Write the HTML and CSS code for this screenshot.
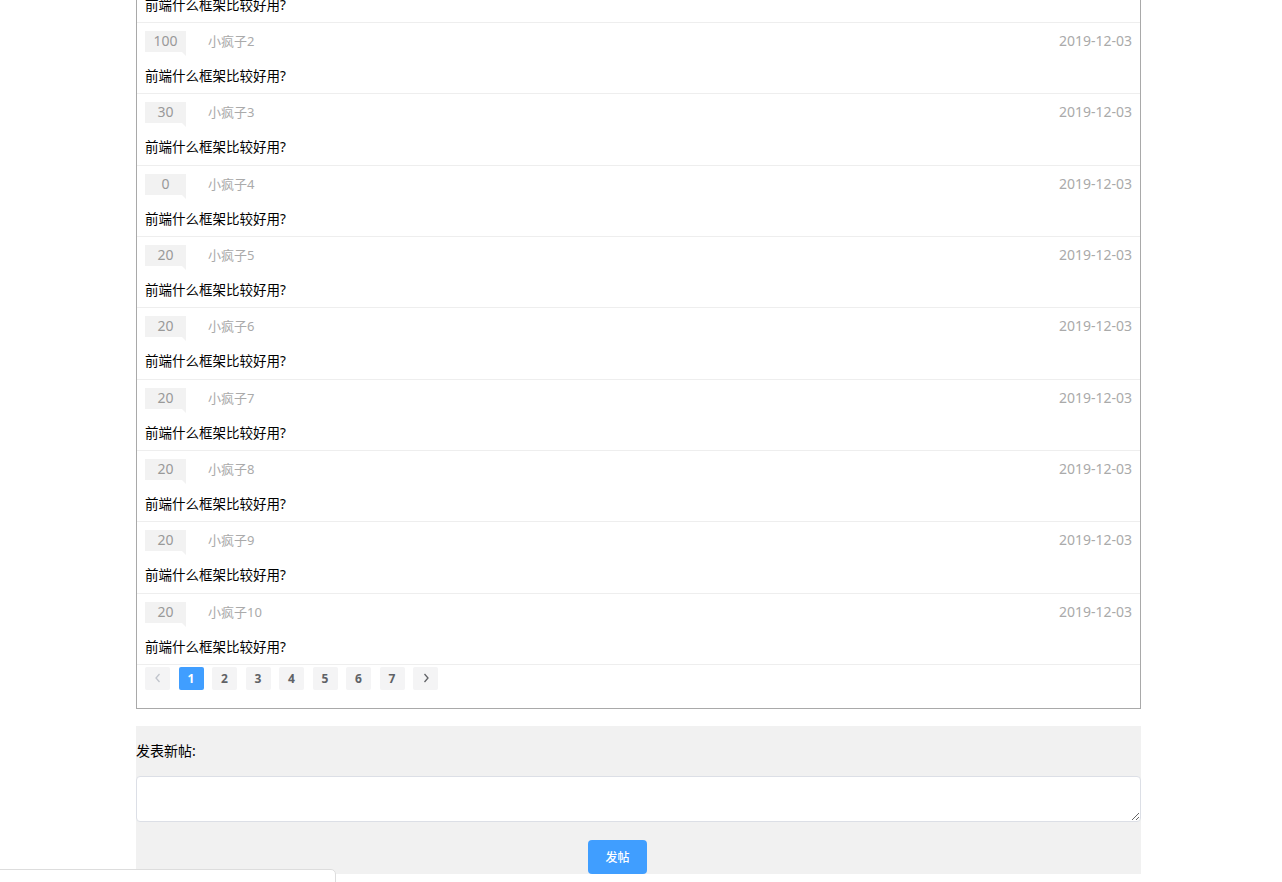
FILE: index.html
```html
<!DOCTYPE html>
<html lang="zh">
<head>
<meta charset="utf-8">
<title>帖子列表</title>
<link rel="stylesheet" href="styles.css">
</head>
<body>
<div class="page">
  <div class="list-box">
    <ul class="post-list">
      <li class="post"><div class="post-head"><span class="badge">20</span><span class="author">小疯子1</span><span class="date">2019-12-03</span></div><p class="post-title">前端什么框架比较好用?</p></li>
      <li class="post"><div class="post-head"><span class="badge">100</span><span class="author">小疯子2</span><span class="date">2019-12-03</span></div><p class="post-title">前端什么框架比较好用?</p></li>
      <li class="post"><div class="post-head"><span class="badge">30</span><span class="author">小疯子3</span><span class="date">2019-12-03</span></div><p class="post-title">前端什么框架比较好用?</p></li>
      <li class="post"><div class="post-head"><span class="badge">0</span><span class="author">小疯子4</span><span class="date">2019-12-03</span></div><p class="post-title">前端什么框架比较好用?</p></li>
      <li class="post"><div class="post-head"><span class="badge">20</span><span class="author">小疯子5</span><span class="date">2019-12-03</span></div><p class="post-title">前端什么框架比较好用?</p></li>
      <li class="post"><div class="post-head"><span class="badge">20</span><span class="author">小疯子6</span><span class="date">2019-12-03</span></div><p class="post-title">前端什么框架比较好用?</p></li>
      <li class="post"><div class="post-head"><span class="badge">20</span><span class="author">小疯子7</span><span class="date">2019-12-03</span></div><p class="post-title">前端什么框架比较好用?</p></li>
      <li class="post"><div class="post-head"><span class="badge">20</span><span class="author">小疯子8</span><span class="date">2019-12-03</span></div><p class="post-title">前端什么框架比较好用?</p></li>
      <li class="post"><div class="post-head"><span class="badge">20</span><span class="author">小疯子9</span><span class="date">2019-12-03</span></div><p class="post-title">前端什么框架比较好用?</p></li>
      <li class="post"><div class="post-head"><span class="badge">20</span><span class="author">小疯子10</span><span class="date">2019-12-03</span></div><p class="post-title">前端什么框架比较好用?</p></li>
    </ul>
    <div class="pager">
      <button class="pg-btn pg-disabled" type="button"><svg width="8" height="10" viewBox="0 0 8 10"><path d="M5.5 1 L2 5 L5.5 9" fill="none" stroke="currentColor" stroke-width="1.3"/></svg></button>
      <button class="pg-btn pg-active" type="button">1</button>
      <button class="pg-btn" type="button">2</button>
      <button class="pg-btn" type="button">3</button>
      <button class="pg-btn" type="button">4</button>
      <button class="pg-btn" type="button">5</button>
      <button class="pg-btn" type="button">6</button>
      <button class="pg-btn" type="button">7</button>
      <button class="pg-btn" type="button"><svg width="8" height="10" viewBox="0 0 8 10"><path d="M2.5 1 L6 5 L2.5 9" fill="none" stroke="currentColor" stroke-width="1.3"/></svg></button>
    </div>
  </div>
  <div class="new-post">
    <label class="np-label" for="np">发表新帖:</label>
    <textarea id="np" class="np-input"></textarea>
    <button class="np-submit" type="button">发帖</button>
  </div>
</div>
<div class="float-panel"></div>
</body>
</html>
```
FILE: styles.css
```css
html, body {
  margin: 0;
  padding: 0;
  background: #fff;
  overflow: hidden;
}
body {
  font-family: "Noto Sans", "Noto Sans CJK SC", sans-serif;
  color: #000;
}
.page {
  width: 1005px;
  margin: -49.33px 0 0 136px;
}
.list-box {
  border: 1px solid #a9a9a9;
  padding-bottom: 18px;
}
.post-list {
  list-style: none;
  margin: 0;
  padding: 0;
}
.post {
  padding: 8px 8px 7.33px 8px;
  border-bottom: 1px solid #eee;
}
.post-head {
  display: flex;
  align-items: center;
  height: 23px;
}
.badge {
  position: relative;
  box-sizing: border-box;
  width: 41px;
  height: 21px;
  background: #f2f2f2;
  color: #999;
  font-size: 14px;
  line-height: 20px;
  text-align: center;
  margin-top: -2px;
}
.badge::after {
  content: "";
  position: absolute;
  right: 0;
  bottom: -4px;
  border-top: 4px solid #f2f2f2;
  border-left: 4px solid transparent;
}
.author {
  margin-left: 22px;
  color: #aaa;
  font-size: 13px;
  margin-top: -4px;
}
.date {
  margin-left: auto;
  color: #aaa;
  font-size: 14px;
  margin-top: -4px;
}
.post-title {
  margin: 12px 0 0;
  font-size: 13.5px;
  line-height: 20px;
  color: #000;
}
.pager {
  display: flex;
  gap: 8.5px;
  padding: 2px 8px 0;
}
.pg-btn {
  width: 25px;
  height: 23px;
  border: none;
  border-radius: 2px;
  background: #f4f4f5;
  color: #606266;
  font-family: "Noto Sans", sans-serif;
  font-size: 12px;
  font-weight: 700;
  padding: 0;
  display: flex;
  align-items: center;
  justify-content: center;
}
.pg-disabled {
  color: #c0c4cc;
}
.pg-active {
  background: #409eff;
  color: #fff;
}
.new-post {
  margin-top: 17px;
  background: #f1f1f1;
  display: flex;
  flex-direction: column;
  align-items: flex-start;
}
.np-label {
  font-size: 14px;
  line-height: 20px;
  margin-top: 15px;
}
.np-input {
  box-sizing: border-box;
  width: 100%;
  height: 46px;
  margin-top: 15px;
  border: 1px solid #dcdfe6;
  border-radius: 4px;
  background: #fff;
  font-family: inherit;
  font-size: 14px;
}
.np-submit {
  margin: 18px 0 0 452px;
  width: 59px;
  height: 34px;
  border: none;
  border-radius: 4px;
  background: #409eff;
  color: #fff;
  font-family: "Noto Sans CJK SC", sans-serif;
  font-size: 12px;
  font-weight: 500;
}
.float-panel {
  position: fixed;
  left: -1px;
  top: 869px;
  width: 335px;
  height: 40px;
  background: #fff;
  border: 1px solid #ddd;
  border-radius: 0 5px 0 0;
}
```
